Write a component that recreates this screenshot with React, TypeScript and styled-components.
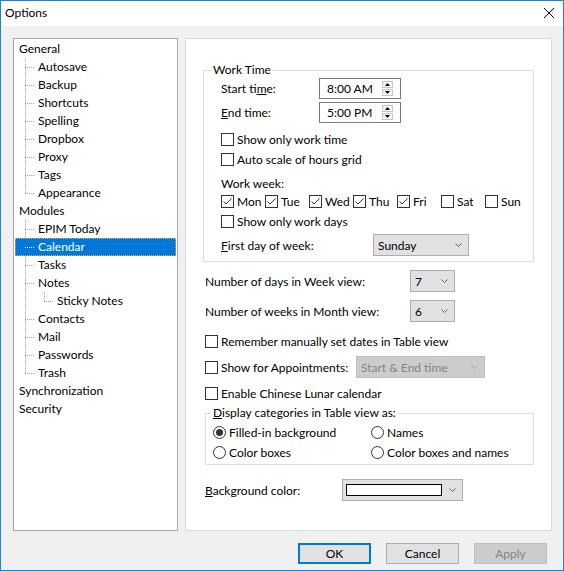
import React from "react";
import styled, { createGlobalStyle, css } from "styled-components";

const GlobalStyle = createGlobalStyle`
  html, body {
    margin: 0;
    padding: 0;
    background: #ffffff;
  }
  body {
    font-family: Lato, "Noto Sans", sans-serif;
    font-size: 12px;
    color: #000000;
  }
  * {
    box-sizing: border-box;
  }
`;

// window frame
const Window = styled.div`
  width: 564px;
  height: 571px;
  border: 1px solid #1883d7;
  background: #f0f0f0;
  display: flex;
  flex-direction: column;
`;

const TitleBar = styled.div`
  height: 25px;
  flex-shrink: 0;
  background: #ffffff;
  display: flex;
  align-items: center;
  padding: 0 9px 1px 4px;
`;

const Title = styled.span`
  line-height: 16px;
`;

const CloseGlyph = styled.svg`
  margin-left: auto;
  display: block;
`;

const Body = styled.div`
  flex: 1;
  display: flex;
  flex-direction: column;
  padding: 12px 11px 0 12px;
`;

const Panes = styled.div`
  display: flex;
  gap: 7px;
  height: 493px;
`;

// tree
const TreeBox = styled.div`
  width: 165px;
  height: 100%;
  border: 1px solid #a5a5ab;
  background: #ffffff;
  padding: 1px 1px 0;
`;

const TreeList = styled.ul`
  margin: 0;
  padding: 0;
  list-style: none;
`;

const dotsV = (c: string) =>
  `repeating-linear-gradient(to bottom, ${c} 0 1px, transparent 1px 2px)`;
const dotsH = (c: string) =>
  `repeating-linear-gradient(to right, ${c} 0 1px, transparent 1px 2px)`;

const TreeItem = styled.li<{ $level: number }>`
  position: relative;
  ${(p) =>
    p.$level > 0 &&
    css`
      &::before {
        content: "";
        position: absolute;
        left: ${10 + (p.$level - 1) * 19}px;
        top: 0;
        bottom: 0;
        width: 1px;
        background: ${dotsV("#a0a0a0")};
      }
      &:last-child::before {
        bottom: auto;
        height: 9px;
      }
    `}
`;

const TreeRow = styled.div<{ $level: number; $selected?: boolean }>`
  position: relative;
  z-index: 1;
  height: 18px;
  line-height: 18px;
  white-space: nowrap;
  padding-left: ${(p) => 4 + p.$level * 19}px;
  background: ${(p) => (p.$selected ? "#0078d7" : "transparent")};
  color: ${(p) => (p.$selected ? "#ffffff" : "#000000")};
  ${(p) =>
    p.$selected &&
    css`
      outline: 1px dotted #f2a25c;
      outline-offset: -1px;
    `}
  ${(p) =>
    p.$level > 0 &&
    css`
      &::before {
        content: "";
        position: absolute;
        left: ${10 + (p.$level - 1) * 19}px;
        top: 9px;
        width: 10px;
        height: 1px;
        background: ${dotsH(p.$selected ? "#ffffff" : "#a0a0a0")};
      }
    `}
`;

type TreeNode = { label: string; selected?: boolean; children?: TreeNode[] };

const tree: TreeNode[] = [
  {
    label: "General",
    children: [
      { label: "Autosave" },
      { label: "Backup" },
      { label: "Shortcuts" },
      { label: "Spelling" },
      { label: "Dropbox" },
      { label: "Proxy" },
      { label: "Tags" },
      { label: "Appearance" },
    ],
  },
  {
    label: "Modules",
    children: [
      { label: "EPIM Today" },
      { label: "Calendar", selected: true },
      { label: "Tasks" },
      { label: "Notes", children: [{ label: "Sticky Notes" }] },
      { label: "Contacts" },
      { label: "Mail" },
      { label: "Passwords" },
      { label: "Trash" },
    ],
  },
  { label: "Synchronization" },
  { label: "Security" },
];

function TreeBranch({ nodes, level }: { nodes: TreeNode[]; level: number }) {
  return (
    <TreeList>
      {nodes.map((n) => (
        <TreeItem key={n.label} $level={level}>
          <TreeRow $level={level} $selected={n.selected}>
            {n.label}
          </TreeRow>
          {n.children && <TreeBranch nodes={n.children} level={level + 1} />}
        </TreeItem>
      ))}
    </TreeList>
  );
}

// settings pane
const SettingsPane = styled.div`
  width: 367px;
  height: 100%;
  border: 1px solid #dadada;
  background: #ffffff;
  display: flex;
  flex-direction: column;
`;

const GroupBox = styled.fieldset<{ $mt: number; $ml: number; $w: number }>`
  margin: ${(p) => p.$mt}px 0 0 ${(p) => p.$ml}px;
  width: ${(p) => p.$w}px;
  min-width: 0;
  padding: 0;
  border: 1px solid #dcdcdc;
`;

const Caption = styled.legend<{ $offset: number }>`
  margin-left: ${(p) => p.$offset}px;
  padding: 0 2px;
  line-height: 16px;
  height: 16px;
`;

const GroupContent = styled.div<{ $pl: number; $pb: number }>`
  padding: 0 0 ${(p) => p.$pb}px ${(p) => p.$pl}px;
  display: flex;
  flex-direction: column;
`;

const FieldRow = styled.div<{ $mt: number; $ml?: number; $h?: number }>`
  display: flex;
  align-items: center;
  height: ${(p) => p.$h ?? 22}px;
  margin-top: ${(p) => p.$mt}px;
  margin-left: ${(p) => p.$ml ?? 0}px;
`;

const FieldLabel = styled.span<{ $w: number; $pl?: number }>`
  width: ${(p) => p.$w}px;
  padding-left: ${(p) => p.$pl ?? 0}px;
  flex-shrink: 0;
  white-space: nowrap;
`;

const PlainLabel = styled.div<{ $mt: number }>`
  height: 16px;
  line-height: 16px;
  margin-top: ${(p) => p.$mt}px;
`;

const CheckRow = styled.label<{ $mt: number; $ml?: number }>`
  display: flex;
  align-items: center;
  gap: 3px;
  height: 19px;
  margin-top: ${(p) => p.$mt}px;
  margin-left: ${(p) => p.$ml ?? 0}px;
  white-space: nowrap;
`;

const DaysRow = styled.div`
  display: grid;
  grid-template-columns: repeat(6, 44px) auto;
  height: 19px;
`;

const DayCheck = styled.label`
  display: flex;
  align-items: center;
  gap: 3px;
`;

const RadioGrid = styled.div`
  display: grid;
  grid-template-columns: 158px auto;
  grid-auto-rows: 19px;
  row-gap: 1px;
  margin-top: 2px;
`;

const RadioItem = styled.label`
  display: flex;
  align-items: center;
  gap: 3px;
  white-space: nowrap;
`;

const Combo = styled.div<{ $w: number; $disabled?: boolean }>`
  width: ${(p) => p.$w}px;
  height: 22px;
  flex-shrink: 0;
  display: flex;
  align-items: center;
  padding: 0 6px 0 4px;
  border: 1px solid ${(p) => (p.$disabled ? "#bfbfbf" : "#adadad")};
  background: ${(p) => (p.$disabled ? "#cccccc" : "#e1e1e1")};
  color: ${(p) => (p.$disabled ? "#838383" : "#000000")};
  white-space: nowrap;
`;

const ComboText = styled.span`
  flex: 1;
`;

const ColorSwatch = styled.span`
  width: 96px;
  height: 12px;
  margin-left: -1px;
  border: 1px solid #000000;
  background: #ffffff;
`;

const SpinBox = styled.div`
  width: 82px;
  height: 21px;
  display: flex;
  align-items: center;
  padding: 0 7px 0 7px;
  border: 1px solid #7a7a7a;
  background: #ffffff;
`;

const SpinValue = styled.span`
  flex: 1;
`;

const SpinButtons = styled.div`
  display: flex;
  flex-direction: column;
  gap: 1px;
`;

const SpinButton = styled.span`
  width: 11px;
  height: 7px;
  border: 1px solid #c4c4c4;
  display: flex;
  align-items: center;
  justify-content: center;
  background: #f8f8f8;
`;

// bottom buttons
const ButtonBar = styled.div`
  display: flex;
  justify-content: flex-end;
  gap: 15px;
  margin-top: 12px;
  padding-right: 5px;
`;

const DialogButton = styled.button<{ $default?: boolean }>`
  width: 73px;
  height: 21px;
  padding: 0;
  font: inherit;
  color: #000000;
  background: #e1e1e1;
  border: ${(p) => (p.$default ? "2px solid #0078d7" : "1px solid #adadad")};
  &:disabled {
    background: #cccccc;
    border-color: #bfbfbf;
    color: #838383;
  }
`;

function Chevron({ color = "#606060" }: { color?: string }) {
  return (
    <svg width="7" height="4" viewBox="0 0 7 4">
      <polyline points="0.5,0.5 3.5,3.5 6.5,0.5" fill="none" stroke={color} strokeWidth="1" />
    </svg>
  );
}

function CheckBox({ checked }: { checked?: boolean }) {
  return (
    <svg width="13" height="13" viewBox="0 0 13 13" style={{ flexShrink: 0 }}>
      <rect x="0.5" y="0.5" width="12" height="12" fill="#ffffff" stroke="#333333" />
      {checked && (
        <path d="M2.5 6.5 L5 9 L10.5 3.5" fill="none" stroke="#333333" strokeWidth="1" />
      )}
    </svg>
  );
}

function Radio({ checked }: { checked?: boolean }) {
  return (
    <svg width="13" height="13" viewBox="0 0 13 13" style={{ flexShrink: 0 }}>
      <circle cx="6.5" cy="6.5" r="6" fill="#ffffff" stroke="#333333" />
      {checked && <circle cx="6.5" cy="6.5" r="3.5" fill="#333333" />}
    </svg>
  );
}

function Spinner({ value }: { value: string }) {
  return (
    <SpinBox>
      <SpinValue>{value}</SpinValue>
      <SpinButtons>
        <SpinButton>
          <svg width="5" height="3" viewBox="0 0 5 3">
            <polygon points="0,3 5,3 2.5,0" fill="#000000" />
          </svg>
        </SpinButton>
        <SpinButton>
          <svg width="5" height="3" viewBox="0 0 5 3">
            <polygon points="0,0 5,0 2.5,3" fill="#000000" />
          </svg>
        </SpinButton>
      </SpinButtons>
    </SpinBox>
  );
}

const days = [
  { d: "Mon", on: true },
  { d: "Tue", on: true },
  { d: "Wed", on: true },
  { d: "Thu", on: true },
  { d: "Fri", on: true },
  { d: "Sat", on: false },
  { d: "Sun", on: false },
];

export default function App() {
  return (
    <>
      <GlobalStyle />
      <Window>
        <TitleBar>
          <Title>Options</Title>
          <CloseGlyph width="10" height="10" viewBox="0 0 10 10">
            <path d="M0 0 L10 10 M10 0 L0 10" stroke="#000000" strokeWidth="1" />
          </CloseGlyph>
        </TitleBar>
        <Body>
          <Panes>
            <TreeBox>
              <TreeBranch nodes={tree} level={0} />
            </TreeBox>
            <SettingsPane>
              <GroupBox $mt={23} $ml={17} $w={331}>
                <Caption $offset={7}>Work Time</Caption>
                <GroupContent $pl={17} $pb={5}>
                  <FieldRow $mt={0} $h={21}>
                    <FieldLabel $w={98}>
                      Start ti<u>m</u>e:
                    </FieldLabel>
                    <Spinner value="8:00 AM" />
                  </FieldRow>
                  <FieldRow $mt={3} $h={21}>
                    <FieldLabel $w={98}>
                      <u>E</u>nd time:
                    </FieldLabel>
                    <Spinner value="5:00 PM" />
                  </FieldRow>
                  <CheckRow $mt={7}>
                    <CheckBox />
                    Show only work time
                  </CheckRow>
                  <CheckRow $mt={1}>
                    <CheckBox />
                    Auto scale of hours grid
                  </CheckRow>
                  <PlainLabel $mt={7}>Work week:</PlainLabel>
                  <DaysRow>
                    {days.map((x) => (
                      <DayCheck key={x.d}>
                        <CheckBox checked={x.on} />
                        {x.d}
                      </DayCheck>
                    ))}
                  </DaysRow>
                  <CheckRow $mt={1}>
                    <CheckBox />
                    Show only work days
                  </CheckRow>
                  <FieldRow $mt={3}>
                    <FieldLabel $w={152}>
                      <u>F</u>irst day of week:
                    </FieldLabel>
                    <Combo $w={96}>
                      <ComboText>Sunday</ComboText>
                      <Chevron />
                    </Combo>
                  </FieldRow>
                </GroupContent>
              </GroupBox>

              <FieldRow $mt={8} $ml={19}>
                <FieldLabel $w={205}>Number of days in Week view:</FieldLabel>
                <Combo $w={45}>
                  <ComboText>7</ComboText>
                  <Chevron />
                </Combo>
              </FieldRow>
              <FieldRow $mt={8} $ml={19}>
                <FieldLabel $w={205}>Number of weeks in Month view:</FieldLabel>
                <Combo $w={45}>
                  <ComboText>6</ComboText>
                  <Chevron />
                </Combo>
              </FieldRow>
              <CheckRow $mt={10} $ml={19}>
                <CheckBox />
                Remember manually set dates in Table view
              </CheckRow>
              <FieldRow $mt={5} $ml={19}>
                <CheckBox />
                <FieldLabel $w={138} $pl={3}>
                  Show for Appointments:
                </FieldLabel>
                <Combo $w={129} $disabled>
                  <ComboText>Start &amp; End time</ComboText>
                  <Chevron color="#a0a0a0" />
                </Combo>
              </FieldRow>
              <CheckRow $mt={6} $ml={19}>
                <CheckBox />
                Enable Chinese Lunar calendar
              </CheckRow>

              <GroupBox $mt={2} $ml={19} $w={329}>
                <Caption $offset={5}>
                  <u>D</u>isplay categories in Table view as:
                </Caption>
                <GroupContent $pl={7} $pb={2}>
                  <RadioGrid>
                    <RadioItem>
                      <Radio checked />
                      Filled-in background
                    </RadioItem>
                    <RadioItem>
                      <Radio />
                      Names
                    </RadioItem>
                    <RadioItem>
                      <Radio />
                      Color boxes
                    </RadioItem>
                    <RadioItem>
                      <Radio />
                      Color boxes and names
                    </RadioItem>
                  </RadioGrid>
                </GroupContent>
              </GroupBox>

              <FieldRow $mt={14} $ml={19}>
                <FieldLabel $w={137}>
                  <u>B</u>ackground color:
                </FieldLabel>
                <Combo $w={121}>
                  <ColorSwatch />
                  <ComboText />
                  <Chevron />
                </Combo>
              </FieldRow>
            </SettingsPane>
          </Panes>
          <ButtonBar>
            <DialogButton $default>OK</DialogButton>
            <DialogButton>Cancel</DialogButton>
            <DialogButton disabled>Apply</DialogButton>
          </ButtonBar>
        </Body>
      </Window>
    </>
  );
}
